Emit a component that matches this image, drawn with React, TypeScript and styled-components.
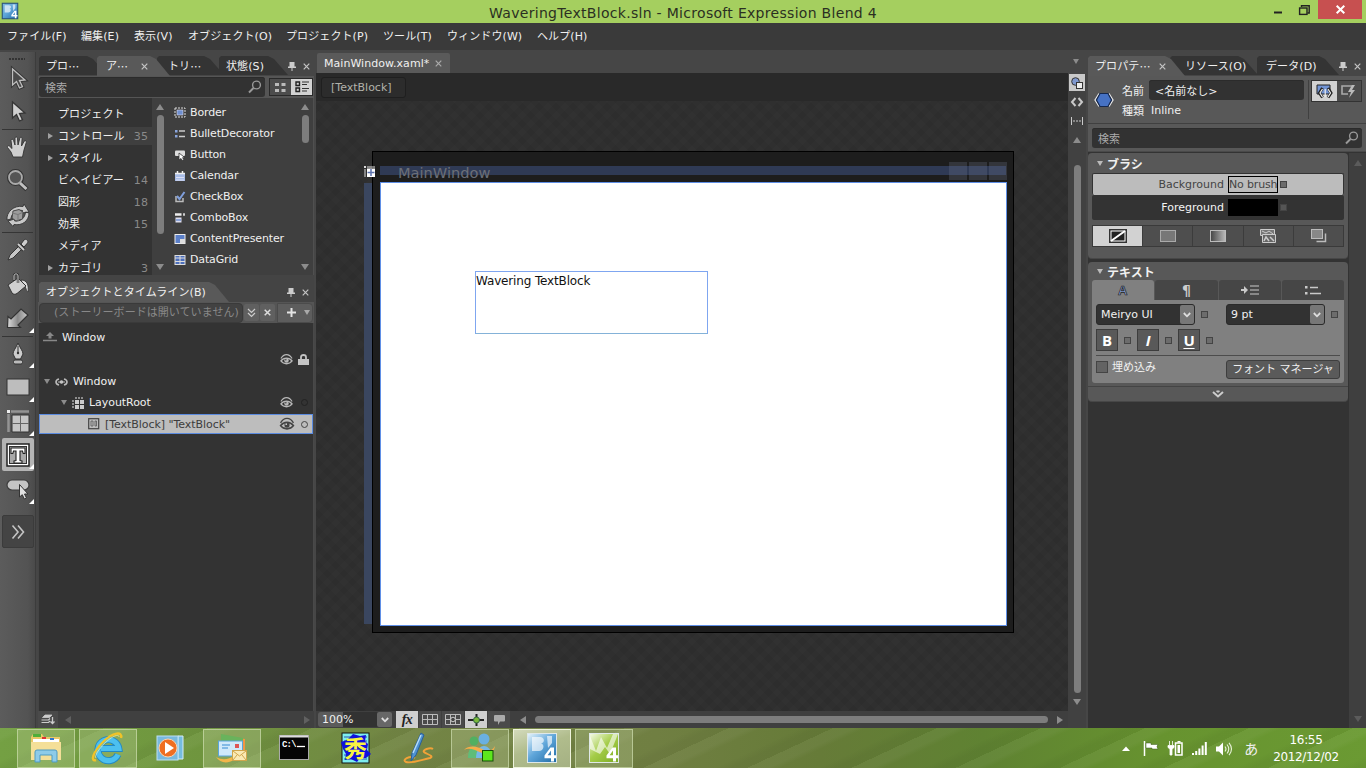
import React from 'react';
import styled, { createGlobalStyle, css } from 'styled-components';

const Global = createGlobalStyle`
  * { box-sizing: border-box; }
  html, body { margin: 0; padding: 0; overflow: hidden; }
  body {
    font-family: "DejaVu Sans", "Noto Sans CJK JP", sans-serif;
    font-size: 11px;
    letter-spacing: -0.2px;
    color: #f0f0f0;
    background: #444;
  }
  svg { display: block; flex: none; overflow: visible; }
`;

/* ---------- shell ---------- */
const Shell = styled.div`
  width: 1366px; height: 768px; display: flex; flex-direction: column; overflow: hidden; white-space: nowrap;
`;
const TitleBar = styled.header`
  height: 23px; background: #a5cf5f; display: flex; align-items: flex-start; color: #2b2f22;
`;
const AppIcon = styled.div`width: 30px; padding: 3px 0 0 2px;`;
const Title = styled.div`
  flex: 1; text-align: center; font-size: 14px; line-height: 26px; letter-spacing: 0.3px; padding-left: 71px;
`;
const WinButton = styled.button<{ $w: number; $close?: boolean }>`
  border: 0; padding: 0; width: ${p => p.$w}px; height: 19px; margin-right: ${p => (p.$close ? 4 : 0)}px;
  background: ${p => (p.$close ? '#c75050' : 'transparent')};
  display: flex; align-items: center; justify-content: center;
`;
const MenuBar = styled.nav`
  height: 27px; background: #3a3a3a; display: flex; padding-left: 7px; line-height: 27px; letter-spacing: 0.1px;
`;
const MenuItem = styled.span<{ $w: number }>`width: ${p => p.$w}px;`;
const Work = styled.main`height: 678px; display: flex; background: #464646;`;
const Spacer = styled.div`flex: 1;`;

/* ---------- toolbox ---------- */
const Toolbox = styled.aside`
  width: 36px; padding: 5px 2px 0 1px; background: linear-gradient(90deg, #5c5c5c, #535353 80%, #4a4a4a);
  display: flex; flex-direction: column; border-right: 1px solid #3c3c3c; margin: 2px 2px 0 0; flex: none;
`;
const Tool = styled.div<{ $h?: number; $active?: boolean; $dark?: boolean }>`
  position: relative; height: ${p => p.$h ?? 34}px; width: 32px; margin-left: 1px; flex: none; border-radius: 2px;
  display: flex; align-items: center; justify-content: center;
  ${p => p.$active && css`background: #b4b4b4;`}
  ${p => p.$dark && css`background: #444; border: 1px solid #3b3b3b; margin-top: 9px;`}
`;
const Corner = styled.i`
  position: absolute; right: 0; bottom: 2px; border-left: 5px solid transparent; border-bottom: 5px solid #fff;
`;
const ToolRule = styled.div<{ $space?: number }>`height: 1px; background: #353535; margin: ${p => p.$space ?? 0}px 0 0 1px; flex: none;`;
const Grip = styled.div`height: 5px; margin: 1px 8px 0 8px; background: repeating-linear-gradient(90deg, #333 0 2px, transparent 2px 3px) 0 0 / 100% 2px no-repeat; flex: none;`;

/* ---------- panels ---------- */
const LeftPanel = styled.section`
  width: 276px; display: flex; flex-direction: column; padding-top: 6px; flex: none;
`;
const TabStrip = styled.div<{ $pl?: number }>`
  height: 20px; display: flex; padding-left: ${p => p.$pl ?? 1}px; position: relative; flex: none; letter-spacing: 0.1px;
`;
const Tab = styled.div<{ $w: number; $active?: boolean; $over?: number; $pad?: number }>`
  width: ${p => p.$w}px; height: ${p => (p.$active ? 20 : 19)}px; flex: none; line-height: 21px;
  padding-left: ${p => p.$pad ?? 8}px; margin-left: ${p => -(p.$over ?? 0)}px;
  background: ${p => (p.$active ? '#595959' : '#343434')}; display: flex;
  clip-path: polygon(0 2px, 2px 0, calc(100% - 20px) 0, calc(100% - 14px) 3px, 100% 100%, 0 100%);
  position: relative; z-index: ${p => (p.$active ? 2 : 1)};
`;
const Dots = styled.span`font-family: "Noto Sans CJK JP", sans-serif;`;
const TabX = styled.span<{ $ml?: number }>`margin-left: ${p => p.$ml ?? 8}px; display: flex; align-items: center;`;
const TabTools = styled.div`
  margin-left: auto; display: flex; align-items: center; gap: 7px; padding-right: 5px;
`;
const SearchRow = styled.div`
  height: 22px; background: #555; display: flex; align-items: center; padding: 0 1px; flex: none;
`;
const Field = styled.div<{ $w: number; $h?: number; $tone?: string }>`
  width: ${p => p.$w}px; height: ${p => p.$h ?? 20}px; border-radius: 3px; background: #323232; color: ${p => p.$tone ?? '#aaa'};
  display: flex; align-items: center; padding: 0 3px 0 6px; justify-content: space-between; flex: none;
  box-shadow: inset 0 1px 0 #2b2b2b; letter-spacing: 0;
`;
const ViewToggle = styled.div`
  margin-left: 4px; width: 44px; height: 18px; border: 1px solid #292929; display: flex;
`;
const ToggleCell = styled.div<{ $on?: boolean }>`
  flex: 1; display: flex; align-items: center; justify-content: center; background: ${p => (p.$on ? '#d2d2d2' : '#4c4c4c')};
`;
const Assets = styled.div`
  height: 177px; display: flex; background: #3f3f3f; flex: none; border-left: 1px solid #484848; border-right: 1px solid #505050;
`;
const Categories = styled.div`width: 113px; background: #333; padding-top: 7px; letter-spacing: 0.1px; display: flex; flex-direction: column; gap: 4px; line-height: 13px;`;
const Category = styled.div<{ $on?: boolean }>`
  height: 18px; flex: none; display: flex; align-items: center; margin-left: 1px; padding: 0 4px 0 18px;
  position: relative; ${p => p.$on && css`background: #3f3f3f;`}
  &:last-child { height: 16px; padding-top: 2px; }
`;
const CatArrow = styled.i`
  position: absolute; left: 8px; top: 6px; border: 3px solid transparent; border-left: 5px solid #a0a0a0; border-right: 0;
`;
const Count = styled.span`margin-left: auto; color: #8a8a8a;`;
const VScroll = styled.div<{ $w: number; $h?: number }>`
  width: ${p => p.$w}px; ${p => p.$h && css`height: ${p.$h}px;`} display: flex; flex-direction: column; align-items: center; padding: 6px 0 5px; flex: none;
`;
const Thumb = styled.div<{ $h: number; $mt?: number }>`
  width: 7px; height: ${p => p.$h}px; margin-top: ${p => p.$mt ?? 5}px; border-radius: 4px; background: #7d7d7d; flex: none;
`;
const Arrow = styled.i<{ $dir: 'up' | 'down' | 'left' | 'right'; $c?: string; $s?: number; $ml?: number }>`
  width: 0; height: 0; flex: none; border: ${p => p.$s ?? 4}px solid transparent;
  ${p => {
    const c = p.$c ?? '#8c8c8c';
    const l = (p.$s ?? 4) + 2;
    if (p.$dir === 'up') return css`border-bottom: ${l}px solid ${c}; border-top: 0;`;
    if (p.$dir === 'down') return css`border-top: ${l}px solid ${c}; border-bottom: 0;`;
    if (p.$dir === 'left') return css`border-right: ${l}px solid ${c}; border-left: 0;`;
    return css`border-left: ${l}px solid ${c}; border-right: 0;`;
  }}
  margin-left: ${p => p.$ml ?? 0}px;
`;
const AssetList = styled.div`flex: 1; padding: 4px 0 0 6px;`;
const Asset = styled.div`height: 21px; display: flex; align-items: center; gap: 4px; letter-spacing: -0.15px;`;

const ObjectsHead = styled.div`height: 27px; padding-top: 7px; background: #444; flex: none;`;
const StoryRow = styled.div`height: 21px; display: flex; align-items: center; background: #555; padding: 0 1px; flex: none;`;
const StoryName = styled.div`width: 204px; height: 20px; background: #424242; border-radius: 4px; padding-left: 14px; color: #888; line-height: 17px; border: 1px solid #3a3a3a; letter-spacing: 0.05px;`;
const SmallBtn = styled.div`width: 15px; height: 17px; border-radius: 2px; background: #606060; margin-left: 1px; display: flex; align-items: center; justify-content: center;`;
const StoryEnd = styled.div`flex: 1; height: 20px; background: #5d5d5d; border-radius: 0 4px 4px 0; display: flex; align-items: center; gap: 8px; padding-left: 9px; margin-left: 2px; border: 1px solid #4b4b4b;`;
const Tree = styled.div`flex: 1; background: #333; padding-top: 3px; border-right: 1px solid #494949; border-left: 1px solid #444;`;
const TreeRow = styled.div<{ $h: number; $pl: number; $sel?: boolean }>`
  height: ${p => p.$h}px; padding-left: ${p => p.$pl}px; display: flex; align-items: center; gap: 5px; letter-spacing: -0.05px;
  ${p => p.$sel && css`background: #bdbdbd; color: #3c3c3c; border: 1px solid #5b8be0; margin-top: 1px;`}
`;
const Marks = styled.div`margin-left: auto; display: flex; align-items: center; width: 35px; gap: 5px; padding-left: 2px;`;
const Dot = styled.i<{ $c: string; $ml?: number }>`width: 7px; height: 7px; border-radius: 50%; border: 1px solid ${p => p.$c}; margin-left: ${p => p.$ml ?? 3}px;`;
const LeftFoot = styled.div`height: 17px; background: #404040; display: flex; align-items: center; padding-right: 4px; flex: none;`;
const FootBtn = styled.div<{ $on?: boolean; $w?: number }>`
  width: ${p => p.$w ?? 22}px; height: 17px; flex: none; display: flex; align-items: center; justify-content: center; margin-right: 1px;
  background: ${p => (p.$on ? '#cfcfcf' : '#4a4a4a')};
`;

/* ---------- document ---------- */
const Doc = styled.section`width: 752px; margin-left: 2px; display: flex; flex-direction: column; flex: none;`;
const DocTabs = styled.div`height: 23px; padding: 3px 0 0 1px; background: #464646; flex: none;`;
const DocTab = styled.div`
  width: 133px; height: 20px; background: #5a5a5a; border-radius: 2px 2px 0 0; padding-left: 7px; line-height: 21px; display: flex; letter-spacing: 0.04px;
`;
const Crumbs = styled.div`height: 28px; background: #292929; padding: 4px 0 0 5px; flex: none;`;
const Crumb = styled.div`width: 85px; height: 21px; border: 1px solid #1f1f1f; border-radius: 3px; background: #2c2c2c; color: #b2b2aa; line-height: 19px; padding-left: 9px; letter-spacing: 0;`;
const Canvas = styled.div`
  height: 610px; position: relative; flex: none; overflow: hidden;
  background: repeating-linear-gradient(45deg, rgba(255,255,255,.012) 0 6px, transparent 6px 12px),
    repeating-linear-gradient(-45deg, rgba(255,255,255,.012) 0 6px, transparent 6px 12px), #2d2d2d;
`;
const Artboard = styled.div`position: absolute; left: 56px; top: 50px; width: 642px; height: 482px; background: #1d1d1d; border: 1px solid #000;`;
const TopRuler = styled.div`position: absolute; left: 64px; top: 65px; width: 626px; height: 9px; background: #2f3a55;`;
const LeftRuler = styled.div`position: absolute; left: 48px; top: 82px; width: 8px; height: 441px; background: #3a465f;`;
const GridMark = styled.div`position: absolute; left: 48px; top: 65px;`;
const FrameTitle = styled.div`position: absolute; left: 82px; top: 62px; font-size: 14.6px; line-height: 20px; color: #6b6f78; letter-spacing: 0;`;
const FrameButtons = styled.div`position: absolute; left: 633px; top: 61px; display: flex; gap: 2px; i { width: 18px; height: 18px; background: rgba(110,118,140,.28); }`;
const Surface = styled.div`position: absolute; left: 64px; top: 81px; width: 627px; height: 444px; background: #fff; border: 1px solid #5f8fe6;`;
const TextNode = styled.div`
  position: absolute; left: 94px; top: 88px; width: 233px; height: 63px; border: 1px solid #7fa6f0; color: #111;
  font-size: 12px; line-height: 18px; letter-spacing: -0.15px; border-bottom-color: #84b2d8;
`;
const DocFoot = styled.div`height: 17px; background: #3f3f3f; display: flex; align-items: center; flex: none;`;
const Zoom = styled.div`width: 74px; margin: 0 4px 0 2px; height: 15px; border-radius: 3px; background: linear-gradient(90deg, #5b5b5b 25px, #323232 25px); display: flex; align-items: center; justify-content: space-between; padding-left: 4px; letter-spacing: 0;`;
const ZoomArrow = styled.div`width: 15px; height: 15px; border-radius: 2px; background: #676767; display: flex; align-items: center; justify-content: center;`;
const Fx = styled.span`font: italic bold 14px/15px "Liberation Serif", serif; color: #222; letter-spacing: -0.5px;`;
const HTrack = styled.div`flex: 1; display: flex; align-items: center; padding: 0 5px 0 9px; justify-content: space-between;`;
const HThumb = styled.div`width: 513px; height: 7px; border-radius: 4px; background: #7d7d7d;`;

const ViewStrip = styled.aside`width: 18px; background: #414141; display: flex; flex-direction: column; align-items: center; flex: none;`;
const ViewTop = styled.div`height: 24px; width: 100%; background: #464646; display: flex; justify-content: center; padding-top: 9px; padding-right: 2px;`;
const ViewBtn = styled.div<{ $on?: boolean }>`width: 16px; height: 17px; margin-bottom: 2px; display: flex; align-items: center; justify-content: center; flex: none; background: ${p => (p.$on ? '#c9c9c9' : 'transparent')};`;

/* ---------- properties ---------- */
const Props = styled.section`width: 278px; flex: none; margin-left: 2px; padding-top: 6px; display: flex; flex-direction: column; background: #464646;`;
const PropsHead = styled.div`height: 47px; background: #585858; display: flex; flex: none; padding: 4px 4px 0 6px;`;
const Ident = styled.div`width: 28px; padding: 12px 0 0 0; flex: none;`;
const IdentRows = styled.div`width: 186px; flex: none;`;
const IdentRow = styled.div`height: 20px; display: flex; align-items: center; gap: 5px; letter-spacing: 0;`;
const Kind = styled.span`padding-left: 2px;`;
const ModeToggle = styled.div`width: 54px; height: 39px; border-left: 1px solid #404040; padding-left: 2px; flex: none;`;
const ModeCells = styled.div`display: flex; width: 51px; height: 22px; border: 1px solid #333;`;
const PropsSearch = styled.div`height: 29px; background: #585858; border-top: 1px solid #404040; padding: 4px 4px 0; border-bottom: 1px solid #4a4a4a; flex: none;`;
const PropsBody = styled.div`flex: 1; display: flex; background: #333; padding-top: 1px;`;
const Cards = styled.div`width: 261px;`;
const Card = styled.div<{ $h: number }>`height: ${p => p.$h}px; border-radius: 4px; background: #585858; margin-bottom: 3px; padding: 0 4px; width: 260px; overflow: hidden; border-bottom: 1px solid #474747;`;
const CardTitle = styled.div<{ $h: number }>`height: ${p => p.$h}px; display: flex; gap: 4px; font-size: 12px; font-weight: bold; align-items: center; padding-left: 5px; letter-spacing: 0;`;
const BrushRow = styled.div<{ $on?: boolean }>`
  height: ${p => (p.$on ? 22 : 25)}px; display: flex; align-items: center; background: ${p => (p.$on ? '#bcbcbc' : '#333')}; color: ${p => (p.$on ? '#444' : '#f5f5f5')};
  border: solid #333; border-width: ${p => (p.$on ? '1px 1px 0' : '0')}; padding-left: ${p => (p.$on ? 0 : 1)}px; border-radius: 2px; width: 252px;
`;
const BrushName = styled.span`width: 131px; text-align: right; margin-right: 4px; letter-spacing: 0;`;
const Swatch = styled.div<{ $fill: string }>`width: 50px; height: 17px; border: 1px solid #000; background: ${p => p.$fill}; line-height: 15px; letter-spacing: -0.15px; display: flex;`;
const Marker = styled.i<{ $c?: string; $ml?: number }>`width: 7px; height: 7px; background: ${p => p.$c ?? '#6c6c6c'}; border: 1px solid #444; margin-left: ${p => p.$ml ?? 2}px; flex: none;`;
const Segments = styled.div`margin-top: 5px; height: 22px; width: 252px; display: flex; border: 1px solid #3a3a3a;`;
const Segment = styled.div<{ $on?: boolean }>`flex: 1; display: flex; align-items: center; justify-content: center; border-left: 1px solid #3c3c3c; background: ${p => (p.$on ? '#d2d2d2' : '#4e4e4e')}; &:first-child { border-left: 0; }`;
const TextTabs = styled.div`display: flex; height: 20px; gap: 1px; width: 252px;`;
const TextTab = styled.div<{ $on?: boolean }>`flex: 1; border-radius: 3px 3px 0 0; background: ${p => (p.$on ? '#808080' : '#464646')}; display: flex; align-items: center; justify-content: center;`;
const Para = styled.span`font-weight: bold; font-size: 14px; line-height: 16px; color: #ccc;`;
const TextPane = styled.div`height: 83px; background: #808080; width: 252px; border-radius: 0 0 3px 3px; padding: 4px 4px 0;`;
const PaneRow = styled.div<{ $h: number }>`height: ${p => p.$h}px; display: flex; align-items: center;`;
const Combo = styled.div<{ $ml?: number }>`width: 99px; height: 21px; margin-left: ${p => p.$ml ?? 0}px; border: 1px solid #2b2b2b; border-radius: 3px; background: #323232; display: flex; justify-content: space-between; align-items: center; padding-left: 4px; flex: none; letter-spacing: 0;`;
const ComboEnd = styled.div`width: 14px; height: 19px; border-radius: 2px; background: #777; display: flex; align-items: center; justify-content: center;`;
const StyleBtn = styled.div<{ $ml?: number }>`
  width: 22px; height: 22px; margin-left: ${p => p.$ml ?? 0}px; background: #595959; border: 1px solid #3d3d3d; text-align: center; color: #fff;
  font: bold 15px/20px "Open Sans", "DejaVu Sans", sans-serif; em { font-style: italic; } u { text-underline-offset: 2px; }
`;
const PaneRule = styled.div`height: 1px; background: #4c4c4c;`;
const EmbedRow = styled.div`display: flex; align-items: flex-start; padding-top: 4px; letter-spacing: 0; line-height: 15px;`;
const Check = styled.i`width: 12px; height: 12px; background: #636363; border: 1px solid #444; margin: 1px 4px 0 0;`;
const PushBtn = styled.div`margin-left: auto; width: 114px; height: 19px; border-radius: 3px; border: 1px solid #3e3e3e; background: #5a5a5a; text-align: center; line-height: 18px;`;
const Expand = styled.div`margin: 3px -4px 0; height: 16px; border-top: 1px solid #444; display: flex; align-items: center; justify-content: center;`;
const PropScroll = styled.div`flex: 1; background: #3f3f3f; display: flex; flex-direction: column; align-items: center; padding: 7px 0 6px;`;

/* ---------- taskbar ---------- */
const Taskbar = styled.footer`
  height: 40px; display: flex; padding-left: 17px; align-items: center; flex: none;
  background: repeating-linear-gradient(155deg, rgba(255,255,255,.04) 0 9px, transparent 14px 30px, rgba(0,0,0,.04) 37px 44px),
    linear-gradient(90deg, #74a043 0, #6f953e 15%, #738545 30%, #707f42 48%, #667b38 60%, #5f8232 72%, #67932f 85%, #6b9a33 100%);
`;
const Task = styled.div<{ $run?: boolean; $on?: boolean }>`
  width: 58px; height: 39px; margin-right: 4px; display: flex; align-items: center; justify-content: center; flex: none;
  border: 1px solid transparent; color: #fff;
  ${p => p.$run && css`background: rgba(200,215,165,.28); border-color: rgba(215,230,185,.6);`}
  ${p => p.$on && css`background: linear-gradient(160deg, #d3dabb, #b0bc8c 45%, #a5b183); border-color: #eef3dc;`}
`;
const Tray = styled.div`margin-left: auto; display: flex; align-items: center; gap: 9px; padding: 1px 19px 0 0;`;
const TrayMore = styled.div`margin-right: 2px;`;
const Ime = styled.span`font-size: 14px; margin: 0 -2px 0 3px; line-height: 20px;`;
const Clock = styled.div`text-align: center; font-size: 12px; line-height: 17px; letter-spacing: -0.35px; color: #fff; width: 82px; padding-top: 1px;`;

/* ---------- glyphs ---------- */
const G = '#c9c9c9';
const S = ({ w, h, children, ...r }: { w: number; h: number; children: React.ReactNode } & React.SVGProps<SVGSVGElement>) => (
  <svg width={w} height={h} viewBox={`0 0 ${w} ${h}`} fill="none" {...r}>{children}</svg>
);
const X = ({ c = '#c4c4c4', s = 7, t = 1.2 }) => (
  <S w={s} h={s}><path d={`M.7.7 ${s - 0.7} ${s - 0.7}M${s - 0.7}.7.7 ${s - 0.7}`} stroke={c} strokeWidth={t} /></S>
);
const Pin = () => <S w={8} h={9}><path d="M1.500 0h5v4.500H8V6H0V4.500h1.500z" fill="#ccc" /><path d="M4 6v3" stroke="#ccc" /></S>;
const Lens = () => (
  <S w={14} h={14}><circle cx="8.500" cy="5" r="3.900" stroke="#999" strokeWidth="1.400" /><path d="M5.500 8 1 12.500" stroke="#999" strokeWidth="2" /></S>
);
const Pointer = ({ hollow = false }) => (
  <S w={18} h={26}>
    {hollow && <path d="M3.500 3v16l4-3.500 3 6.500 3-1.300-3-6.200 5.500-.5z" stroke="#333" strokeWidth="3.200" />}
    <path d="M3.500 3v16l4-3.500 3 6.500 3-1.300-3-6.200 5.500-.5z" fill={hollow ? '#4a4a4a' : '#d0d0d0'} stroke={hollow ? '#bdbdbd' : '#353535'} strokeWidth="1.300" />
  </S>
);
const Hand = () => (
  <S w={24} h={24}><path d="M7 22 5 17 1.500 12.500c-.6-1.500 1-2.400 2.100-1.300L6 13.500 5 5.500c0-1.700 2-1.800 2.500-.2L9 10V3.200c.1-1.700 2.300-1.700 2.500 0L12 10l1.800-6.800c.5-1.500 2.500-1.100 2.300.5L15.500 11l2.700-4.800c.9-1.200 2.500-.3 2.100 1.100L18 15l-1.500 7z" fill="#cfcfcf" stroke="#333" strokeWidth=".9" /></S>
);
const Magnify = () => (
  <S w={24} h={24}><circle cx="9.500" cy="8.500" r="6.500" stroke="#333" strokeWidth="4" /><path d="m14 14 7 6.500" stroke="#333" strokeWidth="5" /><circle cx="9.500" cy="8.500" r="6.500" stroke="#aaa" strokeWidth="1.800" fill="#555" /><path d="m14 14 6.500 6" stroke="#c0c0c0" strokeWidth="3" /></S>
);
const Orbit = () => (
  <S w={24} h={24}><path d="M1 17C0 9 8 2 17 3.500l1-2.500 5 8-7 1 .5-2.500C10 6 5 11 5 16zM23 10c0 8-7 13-15 11.500l-1 2-5-5.500 6.500-2 .2 2C15 18.500 19 15 19.500 9z" fill="#c8c8c8" stroke="#333" strokeWidth=".9" /><path d="m7 8 6-1.500 4 2.500-.5 7-6.500 2-4-3z" fill="#9c9c9c" stroke="#4a4a4a" /><path d="m6 10 6 1.500 4.500-2M12 12v6" stroke="#777" /></S>
);
const Dropper = () => (
  <S w={24} h={24}><path d="m2 22 2-5 9-9 3 3-9 9z" fill="#c6c6c6" stroke="#333" /><path d="m12 6 6 6" stroke="#333" strokeWidth="4" /><path d="m12 6 6 6" stroke="#ccc" strokeWidth="2" /><path d="m15 6 3-4c2-2 5 1 3.500 3L18 9z" fill="#ccc" stroke="#333" /></S>
);
const Bucket = () => (
  <S w={24} h={24}><path d="M15 8c6 0 8 5 7 12-2.500-1-1-5-5-7z" fill="#ddd" stroke="#333" strokeWidth=".8" /><path d="m2 13 10-7 8 8-9 7.500c-2 1.200-3.500 1-5-.5z" fill="#cfcfcf" stroke="#333" /><path d="M8 9V4c0-2.800 4-2.800 4 0v7" stroke="#333" strokeWidth="2.400" /><path d="M8 8V4c0-2.800 4-2.800 4 0v7" stroke="#ccc" strokeWidth="1" /></S>
);
const GradientTool = () => (
  <S w={24} h={24}><defs><linearGradient id="gr"><stop stopColor="#ddd" /><stop offset=".5" stopColor="#888" /><stop offset="1" stopColor="#ccc" /></linearGradient></defs><path d="m1.500 21.500.5-11 3 2.500L15 3l7 6-10 10 2.500 2.500z" fill="url(#gr)" stroke="#333" strokeWidth="1.200" /></S>
);
const Pen = () => (
  <S w={16} h={24}><path d="M8 1C6 6 3 9 3 12l2.500 5h5L13 12c0-3-3-6-5-11z" fill="#ccc" stroke="#333" /><path d="M8 4v7" stroke="#333" /><circle cx="8" cy="11" r="1.200" fill="#333" /><rect x="3.500" y="18" width="9" height="4" rx="1.500" fill="#bbb" stroke="#333" /></S>
);
const GridTool = () => (
  <S w={24} h={24}><path d="M5 2.500h18M2.500 5v18" stroke="#949494" strokeWidth="2.500" /><path d="M1 1h3v3H1z" fill="#eee" /><path d="M6 6h17v17H6z" fill="#c6c6c6" stroke="#333" /><path d="M14.500 6v17M6 14.500h17" stroke="#666" /></S>
);
const TextTool = () => (
  <S w={24} h={24}><rect x="1" y="1" width="22" height="22" fill="#fff" stroke="#222" strokeWidth="1.500" /><rect x="3.500" y="3.500" width="17" height="17" fill="#a9a9a9" stroke="#333" /><path d="M5 5h14v5.500h-1.800L16.500 8H14v9.500l2 .5v2H8v-2l2-.5V8H7.500l-.7 2.500H5z" fill="#fff" stroke="#222" strokeWidth="1.100" /></S>
);
const ButtonTool = () => (
  <S w={24} h={24}><rect x="1" y="3" width="22" height="10" rx="5" fill="#c4c4c4" stroke="#3c3c3c" strokeWidth="1.200" /><path d="M13.500 7.500v12.500l2.800-2.300 2 4.300 2.200-1-2-4h3.500z" fill="#e0e0e0" stroke="#333" /></S>
);
const Eye = ({ dark = false }) => {
  const c = dark ? '#444' : '#b9b9b9';
  return (
    <S w={dark ? 16 : 13} h={dark ? 14 : 13} viewBox="0 0 14 13"><path d="M1 5.500C4-.2 10-.2 13 5.500" stroke={c} strokeWidth="1.200" /><path d="M1 8c3-4 9-4 12 0-3 4-9 4-12 0z" stroke={c} strokeWidth="1.500" /><circle cx="7" cy="7.500" r="2.400" fill={c} /><circle cx="6.300" cy="6.700" r=".8" fill={dark ? '#ccc' : '#333'} /></S>
  );
};
const Blend = ({ s = 16, green = false }) => (
  <svg width={s} height={s} viewBox="0 0 30 30"><defs>
    <linearGradient id={`blend-${s}-${green}`} x1="0" y1="0" x2=".9" y2="1"><stop stopColor={green ? '#f6fbe8' : s < 20 ? '#7fb6de' : '#e8f5fc'} /><stop offset=".5" stopColor={green ? '#a4cc48' : '#5fa6da'} /><stop offset="1" stopColor={green ? '#7fae26' : '#256fa9'} /></linearGradient></defs>
    <rect x=".5" y=".5" width="29" height="29" fill={`url(#blend-${s}-${green})`} stroke={s < 20 ? '#27507a' : '#dfe8e8'} strokeWidth={s < 20 ? 2 : 1} />
    {green ? <path d="M1 3 7 18 12 4l6 11 6-14h5l-8 20-5-7-5 7L1 16z" fill="#fff" opacity=".6" /> : <path d="M5 4h8c5 0 5 6 1 6.500C18 11 17 18 12 18H5zM20 3h5v7l-4 5z" fill="#fff" opacity=".65" />}
    <path d="M24 28.500v-3.300h-6.500v-2.700l6-8h3.500v7.800h2v2.900h-2v3.300zM20.600 22.300H24v-4.800z" fill="#fff" />
  </svg>
);

const assetIcons: Record<string, React.ReactNode> = {
  Border: <><rect x="1" y="1" width="10" height="9" stroke="#ddd" strokeDasharray="2 1" /><rect x="3" y="3" width="6" height="5" fill="#6f8fd0" stroke="#dde" strokeWidth=".6" /></>,
  BulletDecorator: <><path d="M5 3h6M5 8.500h6" stroke="#ccc" strokeWidth="1.500" /><rect x="1" y="2" width="2.500" height="2.500" fill="#8aa5dd" /><rect x="1" y="7" width="2.500" height="2.500" fill="#8aa5dd" /></>,
  Button: <><rect x="1" y="1.500" width="10" height="5.500" rx="1" fill="#ddd" /><path d="M5 4v7l2-1.500 1.500 2 1.300-1L8.500 8.700H11z" fill="#fff" stroke="#333" strokeWidth=".8" /></>,
  Calendar: <><path d="M1 3h10v8H1z" fill="#a8bce6" /><path d="M1 3.500h10M3.500 1v3M8.500 1v3" stroke="#eee" strokeWidth="1.500" /><path d="M2 7.500h8M2 10h8" stroke="#e8e8f8" strokeWidth=".8" /></>,
  CheckBox: <><path d="M2 5v5.500h7V7" stroke="#bbb" strokeWidth="1.500" /><path d="m3 5 2.500 3 5-7" stroke="#7f9edb" strokeWidth="2" /></>,
  ComboBox: <><path d="M1 2.500h6.500" stroke="#eee" strokeWidth="2.500" /><path d="M9 2.500h2" stroke="#ccc" strokeWidth="2.500" /><rect x="1.500" y="5.500" width="6" height="5" fill="#dde" /><path d="M2 8h5" stroke="#6f8fd0" strokeWidth="1.500" /></>,
  ContentPresenter: <><rect x="1" y="1.500" width="10" height="9" fill="#5b7fc8" stroke="#eee" /><path d="M6 6h5v4.500H6z" fill="#ddd" /></>,
  DataGrid: <><rect x="1" y="1.500" width="10" height="9" fill="#4c6fbc" stroke="#ddd" /><path d="M6 2v9M1 4h10M1 7.500h10" stroke="#ddd" /></>,
};

const tasks: { run?: boolean; on?: boolean; icon: React.ReactNode }[] = [
  { run: true, icon: <S w={32} h={30}><path d="M1 4 3 1h9l2 3h16v22H1z" fill="#e9c867" /><path d="M3 1h8v3H3z" fill="#4fae3a" /><path d="M3 6h26v4H3z" fill="#fff" /><path d="M12 4h4v2h-4z" fill="#d33" /><path d="M20 5h4v2h-4z" fill="#37c" /><path d="M1 9h30v18H1z" fill="#f4df98" /><path d="M5 29V19q0-2 2-2h18q2 0 2 2v10h-5v-7H10v7z" fill="#8ecbe8" stroke="#4f9bc2" /></S> },
  { run: true, icon: <S w={34} h={32}><path d="M27 22.500a10.500 10.500 0 1 1 .8-6H10" stroke="#2389c4" strokeWidth="7" /><path d="M27 22.500a10.500 10.500 0 1 1 .8-6H10" stroke="#4cc0f0" strokeWidth="5.200" /><path d="M5 28C-1 30 2 20 12 10S32-1 30 6" stroke="#f0c328" strokeWidth="2.400" /><path d="M5 26c-2-2 3-9 9-15S28 1 28 5" stroke="#fff2a0" strokeWidth=".7" /></S> },
  { icon: <S w={28} h={26}><path d="M22 1h5v23h-5z" fill="#75bce0" stroke="#d6edf8" /><rect x="1" y="1" width="21" height="24" fill="#79b9de" stroke="#bde0f3" /><circle cx="12" cy="13" r="9" fill="#ef6e21" stroke="#fbd3ad" /><path d="m9 7 9 6-9 6z" fill="#fff" /></S> },
  { run: true, icon: <S w={34} h={30}><path d="m8 3 22 3v14H8z" fill="#f29642" /><path d="m6 1 22 4v14H6z" fill="#69b35c" /><rect x="3.500" y="8" width="24" height="15" fill="#cfe9fa" stroke="#5ba5da" /><path d="M7 12h8M7 15h6" stroke="#6aabe0" strokeWidth="1.500" /><path d="M20 11h4v4h-4z" fill="#d55" /><path d="M1 24c7 4 13 2 18-1v4c-7 4-14 3-18-3z" fill="#f3b64a" /><rect x="17.500" y="17.500" width="14" height="10" fill="#faeab5" stroke="#d0a64d" /><path d="m18 18 6.500 5 6.500-5M18 27l4-5m9 5-4-5" stroke="#d0a64d" /></S> },
  { icon: <S w={30} h={26}><rect x=".5" y=".5" width="29" height="24" fill="#050505" stroke="#aaa" /><path d="M1 1.500h28" stroke="#ddd" strokeWidth="2" /><text x="3" y="12" fontSize="9" fill="#fff" fontFamily="Liberation Mono" fontWeight="bold" letterSpacing="-.8">C:\</text><path d="M18 11.500h8" stroke="#fff" strokeWidth="1.300" /></S> },
  { icon: <S w={32} h={32}><rect x="2" y="1" width="27" height="30" fill="#7eeeee" stroke="#111" /><path d="M4 5h23M4 9h23M4 13h23M4 23h23M4 27h23" stroke="#35a" /><path d="m1 10 6-2 6-6 7 2 6-1-1 6 3 3-1 6 4 4-5 4-6 0-3 4-6-3-6 1 1-6-3-5z" fill="#1111dc" /><text x="4" y="24.500" fontSize="23" fontWeight="bold" fill="#f8f442" fontFamily="Noto Sans CJK JP">秀</text></S> },
  { icon: <S w={34} h={32}><path d="M14 26c-5-3-14 2-9 4s15-2 24-4c5-2-4-4-6-6s6-5 9-3" stroke="#f2a238" strokeWidth="1.900" /><path d="M20 1 11 21l-1 8 5-6 8-20z" fill="#4f93d2" stroke="#295e98" /><path d="m20 3-8 18" stroke="#b6dcf8" strokeWidth="1.500" /></S> },
  { run: true, icon: <S w={34} h={32}><circle cx="11" cy="9" r="4.500" fill="#51b061" /><path d="M5 26c0-16 12-16 12 0z" fill="#5fbd78" /><circle cx="21" cy="7" r="5.500" fill="#6ab0e0" /><path d="M13 26c0-16 16-16 16 0z" fill="#76b8e6" /><path d="M1 18c5-5 13-4 20 0 4 2 8 1 11-4-1 7-6 10-13 7S6 15 1 18z" fill="#f6ac48" /><rect x="19.500" y="18.500" width="10.500" height="10.500" fill="#5de71c" stroke="#154e08" /></S> },
  { run: true, on: true, icon: <Blend s={30} /> },
  { run: true, icon: <Blend s={30} green /> },
];

const Chevron = ({ c = '#ddd' }) => <S w={8} h={6}><path d="m.8 1 3.200 3.300L7.200 1" stroke={c} strokeWidth="1.800" /></S>;

const categories: [string, string?, boolean?, boolean?][] = [
  ['プロジェクト'], ['コントロール', '35', true, true], ['スタイル', '', true], ['ビヘイビアー', '14'], ['図形', '18'], ['効果', '15'], ['メディア'], ['カテゴリ', '3', true],
];
const menus: [string, number][] = [
  ['ファイル(F)', 74], ['編集(E)', 53], ['表示(V)', 54], ['オブジェクト(O)', 98], ['プロジェクト(P)', 97], ['ツール(T)', 64], ['ウィンドウ(W)', 90], ['ヘルプ(H)', 60],
];

export default function App() {
  return (
    <Shell>
      <Global />
      <TitleBar>
        <AppIcon><Blend s={16} /></AppIcon>
        <Title>WaveringTextBlock.sln - Microsoft Expression Blend 4</Title>
        <WinButton $w={26}><S w={8} h={8}><path d="M0 6.500h8" stroke="#222" strokeWidth="2" /></S></WinButton>
        <WinButton $w={27}><S w={11} h={10}><path d="M2.500 2V.8h7.700V8H8.500" stroke="#222" strokeWidth="1.400" /><rect x=".6" y="3" width="7.400" height="6.400" stroke="#222" strokeWidth="1.400" /></S></WinButton>
        <WinButton $w={44} $close><X c="#fff" s={9} t={2} /></WinButton>
      </TitleBar>
      <MenuBar>{menus.map(([t, w]) => <MenuItem key={t} $w={w}>{t}</MenuItem>)}</MenuBar>
      <Work>
        <Toolbox>
          <Grip />
          <Tool $h={32}><Pointer hollow /></Tool>
          <Tool><Pointer /></Tool>
          <ToolRule />
          <Tool><Hand /></Tool>
          <Tool><Magnify /></Tool>
          <Tool><Orbit /></Tool>
          <ToolRule />
          <Tool><Dropper /></Tool>
          <Tool><Bucket /></Tool>
          <Tool><GradientTool /><Corner /></Tool>
          <ToolRule $space={1} />
          <Tool $h={33}><Pen /><Corner /></Tool>
          <Tool><S w={24} h={18}><rect x="1" y="1" width="22" height="16" fill="#bdbdbd" stroke="#333" /></S><Corner /></Tool>
          <Tool><GridTool /><Corner /></Tool>
          <Tool $h={33} $active><TextTool /><Corner /></Tool>
          <Tool $h={35}><ButtonTool /><Corner /></Tool>
          <Tool $h={33} $dark><S w={14} h={16}><path d="m1.500 1.500 5.500 6.500-5.500 6.500M7 1.500l5.500 6.500L7 14.500" stroke="#c4c4c4" strokeWidth="1.600" /></S></Tool>
        </Toolbox>

        <LeftPanel>
          <TabStrip>
            <Tab $w={68} $pad={7}>プロ<Dots>…</Dots></Tab>
            <Tab $w={73} $active $over={10} $pad={9}>ア<Dots>…</Dots><TabX $ml={13}><X /></TabX></Tab>
            <Tab $w={67} $over={13} $pad={11}>トリ<Dots>…</Dots></Tab>
            <Tab $w={69} $over={5} $pad={7}>状態(S)</Tab>
            <TabTools><Pin /><X /></TabTools>
          </TabStrip>
          <SearchRow>
            <Field $w={226}><span>検索</span><Lens /></Field>
            <ViewToggle>
              <ToggleCell><S w={11} h={9}><path d="M0 0h4v3H0zM6.500 0h4v3h-4zM0 6h4v3H0zM6.500 6h4v3h-4z" fill="#bbb" /></S></ToggleCell>
              <ToggleCell $on><S w={14} h={12}><path d="M1 1h3.500v3.500H1zM1 7h3.500v3.500H1z" stroke="#222" strokeWidth="1.400" /><path d="M7 1h7M7 3.500h5M7 7.500h7M7 10h5" stroke="#333" strokeWidth="1.200" /></S></ToggleCell>
            </ViewToggle>
          </SearchRow>
          <Assets>
            <Categories>
              {categories.map(([t, n, arrow, on]) => (
                <Category key={t} $on={on}>{arrow && <CatArrow />}{t}{n && <Count>{n}</Count>}</Category>
              ))}
            </Categories>
            <VScroll $w={16}><Arrow $dir="up" /><Thumb $h={119} /><Spacer /><Arrow $dir="down" /></VScroll>
            <AssetList>
              {Object.keys(assetIcons).map(n => <Asset key={n}><S w={12} h={12}>{assetIcons[n]}</S>{n}</Asset>)}
            </AssetList>
            <VScroll $w={16}><Arrow $dir="up" /><Thumb $h={28} /><Spacer /><Arrow $dir="down" /></VScroll>
          </Assets>
          <ObjectsHead>
            <TabStrip>
              <Tab $w={190} $active $pad={7}>オブジェクトとタイムライン(B)</Tab>
              <TabTools><Pin /><X /></TabTools>
            </TabStrip>
          </ObjectsHead>
          <StoryRow>
            <StoryName>(ストーリーボードは開いていません)</StoryName>
            <SmallBtn><S w={9} h={10}><path d="m1 1 3.500 3.500L8 1M1 5l3.500 3.500L8 5" stroke="#ccc" strokeWidth="1.200" /></S></SmallBtn>
            <SmallBtn><X c="#ddd" s={7} t={1.5} /></SmallBtn>
            <StoryEnd><S w={9} h={9}><path d="M4.500 0v9M0 4.500h9" stroke="#e4e4e4" strokeWidth="2" /></S><Arrow $dir="down" $s={3} $c="#aaa" /></StoryEnd>
          </StoryRow>
          <Tree>
            <TreeRow $h={22} $pl={4}><S w={14} h={10}><path d="m7 0 4 4H8.500v2.500h-3V4H3z" fill="#888" /><path d="M0 8.500h14" stroke="#888" strokeWidth="1.500" /></S><span>Window</span></TreeRow>
            <TreeRow $h={23} $pl={0}><Marks><Eye /><S w={11} h={11}><path d="M3 5V3q0-2 2.500-2T8 3v2" stroke="#c4c4c4" strokeWidth="1.800" /><path d="M0 5h11v6H0z" fill="#c4c4c4" /></S></Marks></TreeRow>
            <TreeRow $h={21} $pl={5}><Arrow $dir="down" $s={3} /><S w={13} h={8}><path d="M4 1C0 2 0 6 4 7M9 1c4 1 4 5 0 6" stroke="#bbb" strokeWidth="1.600" /><circle cx="6.500" cy="4" r="1.800" fill="#ccc" /><path d="M3 4h7" stroke="#bbb" /></S>Window</TreeRow>
            <TreeRow $h={21} $pl={22}><Arrow $dir="down" $s={3} /><S w={12} h={12}><path d="M3 1h9M1 3v8" stroke="#aaa" strokeWidth="1.500" strokeDasharray="2 1" /><path d="M3 3h4v4H3zM8 3h4v4H8zM3 8h4v4H3zM8 8h4v4H8z" fill="#ccc" /></S><span>LayoutRoot</span><Marks><Eye /><Dot $c="#222" /></Marks></TreeRow>
            <TreeRow $h={20} $pl={48} $sel><S w={12} h={12}><rect x=".7" y=".7" width="10" height="10" stroke="#444" strokeWidth="1.200" /><path d="M3 3h2v5H3zM7 3h1.500v5H7z" stroke="#555" strokeWidth=".8" /></S><span>[TextBlock] "TextBlock"</span><Marks><Eye dark /><Dot $c="#444" $ml={1} /></Marks></TreeRow>
          </Tree>
          <LeftFoot>
            <FootBtn $w={20}><S w={14} h={11}><path d="M4 1h7L8.500 3.500h-7z" fill="#ccc" stroke="#ccc" strokeWidth=".8" /><path d="M.5 6h7l1.500-1.500M.5 8.500h7L9 7" stroke="#ccc" strokeWidth="1.200" /><path d="M11.500 3v6M9.500 7.500l2 2 2-2" stroke="#ccc" strokeWidth="1.300" /></S></FootBtn>
            <Arrow $dir="left" $c="#606060" $ml={6} />
            <Spacer /><Arrow $dir="right" $c="#606060" />
          </LeftFoot>
        </LeftPanel>

        <Doc>
          <DocTabs><DocTab>MainWindow.xaml*<TabX $ml={6}><X c="#aaa" /></TabX></DocTab></DocTabs>
          <Crumbs><Crumb>[TextBlock]</Crumb></Crumbs>
          <Canvas>
            <Artboard />
            <TopRuler /><LeftRuler />
            <FrameTitle>MainWindow</FrameTitle>
            <FrameButtons><i /><i /><i /></FrameButtons>
            <GridMark><S w={11} h={11}><path d="M0 0h2v2H0zM3 .5h8v1H3zM.5 3h1v8h-1z" fill="#ddd" /><path d="M3 2.500h8V11H3z" fill="#fff" /><path d="M7 3v7M3.500 6.500h7" stroke="#5c72ae" strokeWidth="1.500" /></S></GridMark>
            <Surface><TextNode>Wavering TextBlock</TextNode></Surface>
          </Canvas>
          <DocFoot>
            <Zoom><span>100%</span><ZoomArrow><Chevron /></ZoomArrow></Zoom>
            <FootBtn $on><Fx>fx</Fx></FootBtn>
            <FootBtn><S w={16} h={11}><path d="M.5.5h15v10H.5zM5.500 0v11M10.500 0v11M0 5.500h16" stroke="#bbb" /></S></FootBtn>
            <FootBtn><S w={16} h={11}><path d="M.5.5h15v10H.5zM5.500 0v11M10.500 0v11M0 5.500h5M11 5.500h5" stroke="#bbb" /><circle cx="8" cy="5.500" r="2.300" fill="#444" stroke="#ccc" /></S></FootBtn>
            <FootBtn $on><S w={16} h={12}><path d="M8.500 0v12M0 6h16" stroke="#222" strokeWidth="2" /><circle cx="8.500" cy="6" r="3" fill="#7ab83a" stroke="#364" /></S></FootBtn>
            <FootBtn><S w={11} h={10}><path d="M1 0h9q1 0 1 1v4.500q0 1-1 1H6L4 10V6.500H1q-1 0-1-1V1q0-1 1-1z" fill="#aaa" /></S></FootBtn>
            <HTrack><Arrow $dir="left" /><HThumb /><Arrow $dir="right" /></HTrack>
          </DocFoot>
        </Doc>

        <ViewStrip>
          <ViewTop><Arrow $dir="down" $s={3} /></ViewTop>
          <ViewBtn $on><S w={12} h={12}><circle cx="4.500" cy="4.500" r="3.800" fill="#7f98ce" stroke="#333" /><rect x="5.500" y="5.500" width="6" height="6" fill="#eee" stroke="#333" /></S></ViewBtn>
          <ViewBtn><S w={12} h={10}><path d="M4.500 1 1 5l3.500 4M7.500 1 11 5 7.500 9" stroke={G} strokeWidth="2" /></S></ViewBtn>
          <ViewBtn><S w={12} h={8}><path d="M.5 0v8M11.500 0v8" stroke={G} /><path d="M2 4h8" stroke={G} strokeDasharray="2 1" /></S></ViewBtn>
          <VScroll $w={16} $h={579}><Arrow $dir="up" /><Thumb $h={528} $mt={22} /><Spacer /><Arrow $dir="down" /></VScroll>
        </ViewStrip>

        <Props>
          <TabStrip $pl={0}>
            <Tab $w={97} $active $pad={7}>プロパテ<Dots>…</Dots><TabX $ml={8}><X /></TabX></Tab>
            <Tab $w={88} $over={15} $pad={15}>リソース(O)</Tab>
            <Tab $w={82} $over={1} $pad={9}>データ(D)</Tab>
            <TabTools><Pin /><X /></TabTools>
          </TabStrip>
          <PropsHead>
            <Ident><S w={20} h={16}><path d="M5 1.500 1 8l4 6.500M15 1.500 19 8l-4 6.500" stroke="#e8e8e8" strokeWidth="1.300" /><path d="M6 1.500h8L17.500 8 14 14.500H6L2.500 8z" fill="#4672c4" stroke="#16294f" strokeWidth="1.200" /></S></Ident>
            <IdentRows>
              <IdentRow>名前<Field $w={155} $tone="#f0f0f0">&lt;名前なし&gt;</Field></IdentRow>
              <IdentRow>種類<Kind>Inline</Kind></IdentRow>
            </IdentRows>
            <ModeToggle>
              <ModeCells>
                <ToggleCell $on><S w={16} h={15}><path d="M1 1h13v9H1z" fill="#7294d4" stroke="#222" /><path d="M6.500 4 3.500 9l3 4.500M12 4l3 5-3 4.500" stroke="#222" strokeWidth="3" /><path d="M6.500 5 4 9l2.500 4M12 5l2.500 4L12 13M9.200 5v8" stroke="#eee" strokeWidth="1.200" /></S></ToggleCell>
                <ToggleCell><S w={15} h={14}><path d="M7 10H1V2h11" stroke="#aaa" strokeWidth="1.600" /><path d="m11 1-4 7h3l-2 6 6-8h-3l3-5z" fill="#bbb" /></S></ToggleCell>
              </ModeCells>
            </ModeToggle>
          </PropsHead>
          <PropsSearch><Field $w={270}><span>検索</span><Lens /></Field></PropsSearch>
          <PropsBody>
            <Cards>
              <Card $h={106}>
                <CardTitle $h={20}><Arrow $dir="down" $s={3} $c="#bbb" />ブラシ</CardTitle>
                <BrushRow $on><BrushName>Background</BrushName><Swatch $fill="#bcbcbc">No brush</Swatch><Marker /></BrushRow>
                <BrushRow><BrushName>Foreground</BrushName><Swatch $fill="#000" /><Marker $c="#555" /></BrushRow>
                <Segments>
                  <Segment $on><S w={18} h={14}><rect x="1" y="1" width="16" height="12" fill="#222" stroke="#333" strokeWidth="2" /><rect x="2" y="2" width="14" height="10" stroke="#fff" /><path d="M2 12 16 2" stroke="#fff" strokeWidth="2" /></S></Segment>
                  <Segment><S w={16} h={12}><rect x=".5" y=".5" width="15" height="11" fill="#777" stroke="#aaa" /></S></Segment>
                  <Segment><S w={16} h={12}><defs><linearGradient id="sg"><stop stopColor="#444" /><stop offset="1" stopColor="#bbb" /></linearGradient></defs><rect x=".5" y=".5" width="15" height="11" fill="url(#sg)" stroke="#bbb" /></S></Segment>
                  <Segment><S w={17} h={14}><path d="M.5.500h14v6H.5z" fill="#777" stroke="#ccc" /><path d="m2 2 4 2 3-2 4 3" stroke="#ccc" /><path d="M2.500 5.500h13v8h-13z" fill="#666" stroke="#ccc" /><path d="m4 12 2-4 3 4M10 8l4 4" stroke="#ccc" strokeWidth="1.500" /></S></Segment>
                  <Segment><S w={15} h={14}><path d="M5.500 12.500h9v-8" stroke="#bbb" strokeWidth="1.500" /><rect x=".5" y=".5" width="11" height="9" fill="#888" stroke="#bbb" /></S></Segment>
                </Segments>
              </Card>
              <Card $h={140}>
                <CardTitle $h={18}><Arrow $dir="down" $s={3} $c="#bbb" />テキスト</CardTitle>
                <TextTabs>
                  <TextTab $on><S w={12} h={12}><text x="1" y="11" fontFamily="Liberation Sans" fontWeight="bold" fontSize="13" fill="#87a2da" stroke="#222" strokeWidth=".7">A</text></S></TextTab>
                  <TextTab><Para>¶</Para></TextTab>
                  <TextTab><S w={18} h={10}><path d="M0 4h3V1l4 4-4 4V6H0z" fill={G} /><path d="M9 1h9M9 5h9M9 9h9" stroke={G} strokeWidth="1.200" /></S></TextTab>
                  <TextTab><S w={16} h={9}><path d="M0 0h2.500v2.500H0zM0 6h2.500v2.500H0z" fill={G} /><path d="M5 1.500h8M5 7.500h11" stroke={G} strokeWidth="1.300" /></S></TextTab>
                </TextTabs>
                <TextPane>
                  <PaneRow $h={21}>
                    <Combo>Meiryo UI<ComboEnd><Chevron /></ComboEnd></Combo><Marker $ml={6} />
                    <Combo $ml={18}>9 pt<ComboEnd><Chevron /></ComboEnd></Combo><Marker $ml={6} />
                  </PaneRow>
                  <PaneRow $h={30}>
                    <StyleBtn>B</StyleBtn><Marker $ml={6} />
                    <StyleBtn $ml={6}><em>I</em></StyleBtn><Marker $ml={6} />
                    <StyleBtn $ml={6}><u>U</u></StyleBtn><Marker $ml={6} />
                  </PaneRow>
                  <PaneRule />
                  <EmbedRow><Check />埋め込み<PushBtn>フォント マネージャ</PushBtn></EmbedRow>
                </TextPane>
                <Expand><S w={12} h={9}><path d="m1 2 5 4.500L11 2" stroke="#ccc" strokeWidth="2" /><path d="M4.500 1 6 2.500 7.500 1z" fill="#ccc" stroke="#ccc" /></S></Expand>
              </Card>
            </Cards>
            <PropScroll><Arrow $dir="up" $c="#5b5b5b" /><Spacer /><Arrow $dir="down" $c="#5b5b5b" /></PropScroll>
          </PropsBody>
        </Props>
      </Work>

      <Taskbar>
        {tasks.map((t, i) => <Task key={i} $run={t.run} $on={t.on}>{t.icon}</Task>)}
        <Tray>
          <TrayMore><S w={12} h={5}><path d="M2 5 6 .5 10 5z" fill="#fff" /></S></TrayMore>
          <S w={16} h={15}><path d="M1.500 0v15" stroke="#fff" strokeWidth="1.500" /><path d="M3 2h5v1.500h7q-2 2 0 4.500H9V7H3z" fill="#fff" stroke="#3d5a20" strokeWidth=".5" /></S>
          <S w={15} h={15}><path d="M1.500 0v4M4.500 0v4M0 4.500h6v2L4 8v6H2V8L0 6.500z" fill="#fff" stroke="#fff" strokeWidth=".8" /><rect x="7.500" y="2" width="6.500" height="12" stroke="#fff" strokeWidth="1.500" /><path d="M9.500 4h2.500v8H9.500zM9.500 0h3v1.500h-3z" fill="#fff" /></S>
          <S w={15} h={13}><path d="M0 11h2v2H0zM3.200 9h2v4h-2zM6.400 6.500h2V13h-2zM9.600 3.500h2V13h-2zM12.800 0h2v13h-2z" fill="#fff" /></S>
          <S w={16} h={14}><path d="M0 4.500h3L7 .5v13l-4-4H0z" fill="#fff" /><path d="M9 4.500q2 2.500 0 5M11 2.500q3.500 4.500 0 9M13 .8q5 6.200 0 12.400" stroke="#e8f2d8" strokeWidth="1.100" /></S>
          <Ime>あ</Ime>
          <Clock><div>16:55</div><div>2012/12/02</div></Clock>
        </Tray>
      </Taskbar>
    </Shell>
  );
}
